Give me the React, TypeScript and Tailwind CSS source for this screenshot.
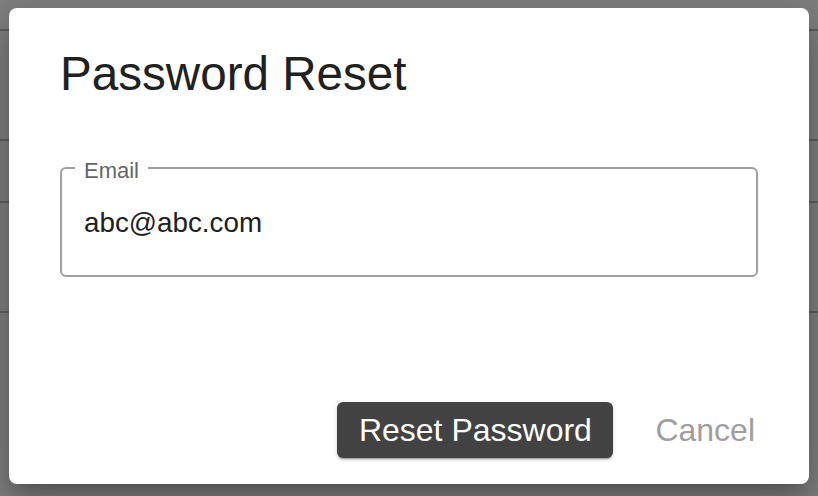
import React from "react";

const font = { fontFamily: '"Liberation Sans", Arial, sans-serif' };

function BackdropPage() {
  // faint table rows of the page behind the dialog
  return (
    <div className="flex flex-col bg-white h-full">
      <div className="h-[31px] border-b-2 border-[#bdbdbd]" />
      <div className="h-[110px] border-b-2 border-[#bdbdbd]" />
      <div className="h-[62px] border-b-2 border-[#bdbdbd]" />
      <div className="h-[110px] border-b-2 border-[#bdbdbd]" />
    </div>
  );
}

function EmailField() {
  return (
    <div className="relative mt-[64px] rounded-[6px] border-2 border-[#a0a0a0] pl-[22px] pt-[38px] pb-[36px]">
      <span className="absolute left-[13px] top-[-9px] bg-white px-[9px] text-[22px] leading-[22px] text-[#666666]">
        Email
      </span>
      <div className="text-[27.8px] leading-[32px] text-[#212121]">abc@abc.com</div>
    </div>
  );
}

export default function App() {
  return (
    <div className="relative h-[496px] w-[818px] overflow-hidden" style={font}>
      <BackdropPage />
      <div className="absolute inset-0 bg-black/50">
        <div className="ml-[9px] mt-[8px] flex h-[476px] w-[800px] flex-col rounded-[8px] bg-white px-[51px] pt-[37px] shadow-[0_11px_15px_-7px_rgba(0,0,0,0.2),0_24px_38px_3px_rgba(0,0,0,0.14),0_9px_46px_8px_rgba(0,0,0,0.12)]">
          <h2 className="text-[47.6px] leading-[58px] font-normal text-[#212121]">Password Reset</h2>
          <EmailField />
          <div className="mt-auto mr-[-17px] flex items-center justify-end gap-[22px] pb-[26px]">
            <button className="flex h-[56px] w-[276px] items-center justify-center rounded-[6px] bg-[#424242] text-[32px] text-white shadow-[0_3px_1px_-2px_rgba(0,0,0,0.2),0_2px_2px_0_rgba(0,0,0,0.14),0_1px_5px_0_rgba(0,0,0,0.12)]">
              Reset Password
            </button>
            <button className="flex h-[56px] items-center px-[20px] text-[32px] text-[#9e9e9e]">
              Cancel
            </button>
          </div>
        </div>
      </div>
    </div>
  );
}
